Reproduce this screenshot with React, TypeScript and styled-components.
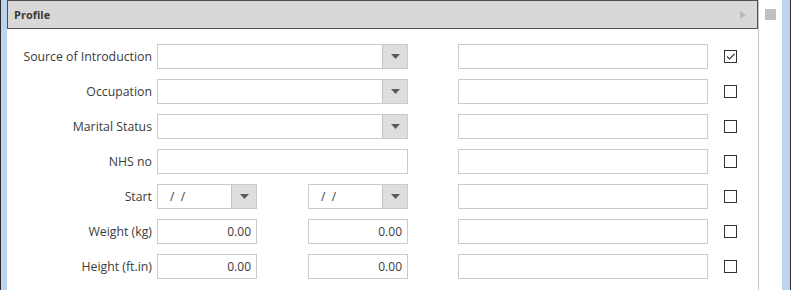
import React from "react";
import styled, { createGlobalStyle } from "styled-components";

const GlobalStyle = createGlobalStyle`
    html, body {
        margin: 0;
        padding: 0;
        background: #ffffff;
    }
    body {
        font-family: "Open Sans", "Noto Sans", "Liberation Sans", sans-serif;
        color: #3b3b3b;
    }
`;

type FieldKind = "combo" | "text" | "dates" | "numbers";

interface IRow {
    label: string;
    kind: FieldKind;
    checked?: boolean;
}

const rows: IRow[] = [
    { label: "Source of Introduction", kind: "combo", checked: true },
    { label: "Occupation", kind: "combo" },
    { label: "Marital Status", kind: "combo" },
    { label: "NHS no", kind: "text" },
    { label: "Start", kind: "dates" },
    { label: "Weight (kg)", kind: "numbers" },
    { label: "Height (ft.in)", kind: "numbers" },
];

const DownArrow = () => (
    <svg width="9" height="5" viewBox="0 0 9 5">
        <polygon points="0,0 9,0 4.5,5" fill="#5a5a5a" />
    </svg>
);

const CheckBox: React.FC<{ checked?: boolean }> = ({ checked }) => (
    <Check>
        {checked && (
            <svg width="11" height="11" viewBox="0 0 11 11">
                <polyline
                    points="2,5.5 4.5,8 9.5,3"
                    fill="none"
                    stroke="#3a3a3a"
                    strokeWidth="1.2"
                />
            </svg>
        )}
    </Check>
);

const Combo: React.FC<{ value?: string; small?: boolean }> = ({ value, small }) => (
    <Field $width={small ? 100 : 251}>
        <FieldText>{value}</FieldText>
        <DropButton>
            <DownArrow />
        </DropButton>
    </Field>
);

const App: React.FunctionComponent = () => {
    const renderField = (kind: FieldKind) => {
        if (kind === "combo") return <Combo />;
        if (kind === "text") return <Field $width={251} />;
        if (kind === "dates") {
            return (
                <Pair>
                    <Combo small value="/  /" />
                    <Combo small value="/  /" />
                </Pair>
            );
        }
        return (
            <Pair>
                <Field $width={100}>
                    <FieldText $right>0.00</FieldText>
                </Field>
                <Field $width={100}>
                    <FieldText $right>0.00</FieldText>
                </Field>
            </Pair>
        );
    };

    return (
        <Window>
            <GlobalStyle />
            <EdgeStrip $side="left" />
            <Panel>
                <Header>
                    <HeaderTitle>Profile</HeaderTitle>
                    <svg width="6" height="8" viewBox="0 0 6 8">
                        <polygon points="0,0 6,4 0,8" fill="#b9b9b9" />
                    </svg>
                </Header>
                <Form>
                    {rows.map((row) => (
                        <React.Fragment key={row.label}>
                            <Label>{row.label}</Label>
                            {renderField(row.kind)}
                            <NoteCell>
                                <Field $width={250} />
                            </NoteCell>
                            <CheckCell>
                                <CheckBox checked={row.checked} />
                            </CheckCell>
                        </React.Fragment>
                    ))}
                </Form>
            </Panel>
            <ScrollArea>
                <ScrollThumb />
            </ScrollArea>
            <EdgeStrip $side="right" />
        </Window>
    );
};

export default App;

// Styled-component

const Window = styled.div`
    display: flex;
    flex-direction: row;
    width: 791px;
    height: 290px;
    overflow: hidden;
    background: #ffffff;
`;

const EdgeStrip = styled.div<{ $side: "left" | "right" }>`
    flex: none;
    width: 6px;
    height: 100%;
    background: #bcd5ec;
    ${(p) =>
        p.$side === "left"
            ? "border-left: 1px solid #2c2c2c;"
            : "border-right: 1px solid #2c2c2c; width: 8px;"}
`;

const Panel = styled.div`
    flex: none;
    display: flex;
    flex-direction: column;
    width: 751px;
    height: 100%;
    border-right: 1px solid #c4c4c4;
`;

const Header = styled.div`
    display: flex;
    flex-direction: row;
    align-items: center;
    justify-content: space-between;
    height: 27px;
    padding: 0 11px 0 6px;
    background: #d8d8d8;
    border: 1px solid #505050;
`;

const HeaderTitle = styled.span`
    font-size: 11px;
    font-weight: 700;
    color: #3a3a3a;
`;

const Form = styled.div`
    display: grid;
    grid-template-columns: 150px 251px 300px 29px;
    grid-auto-rows: 25px;
    row-gap: 10px;
    align-items: center;
    padding-top: 15px;
`;

const Label = styled.span`
    padding-right: 5px;
    text-align: right;
    font-size: 12.3px;
    color: #3b3b3b;
    white-space: nowrap;
`;

const NoteCell = styled.div`
    display: flex;
    justify-content: flex-end;
`;

const CheckCell = styled.div`
    display: flex;
    justify-content: flex-end;
`;

const Pair = styled.div`
    display: flex;
    flex-direction: row;
    justify-content: space-between;
    height: 25px;
`;

const Field = styled.div<{ $width: number }>`
    box-sizing: border-box;
    display: flex;
    flex-direction: row;
    align-items: stretch;
    width: ${(p) => p.$width}px;
    height: 25px;
    border: 1px solid #cbcbcb;
    background: #ffffff;
`;

const FieldText = styled.span<{ $right?: boolean }>`
    flex: 1;
    display: flex;
    align-items: center;
    justify-content: ${(p) => (p.$right ? "flex-end" : "flex-start")};
    padding: 0 5px 0 12px;
    font-size: 12px;
    color: #3b3b3b;
    white-space: pre;
`;

const DropButton = styled.div`
    flex: none;
    display: flex;
    align-items: center;
    justify-content: center;
    width: 24px;
    background: #dedede;
    border-left: 1px solid #c4c4c4;
`;

const Check = styled.div`
    box-sizing: border-box;
    display: flex;
    align-items: center;
    justify-content: center;
    width: 13px;
    height: 13px;
    border: 1px solid #333333;
    background: #ffffff;
`;

const ScrollArea = styled.div`
    flex: none;
    display: flex;
    flex-direction: column;
    align-items: center;
    width: 23px;
    padding-top: 9px;
`;

const ScrollThumb = styled.div`
    width: 11px;
    height: 11px;
    background: #c0c0c0;
`;
